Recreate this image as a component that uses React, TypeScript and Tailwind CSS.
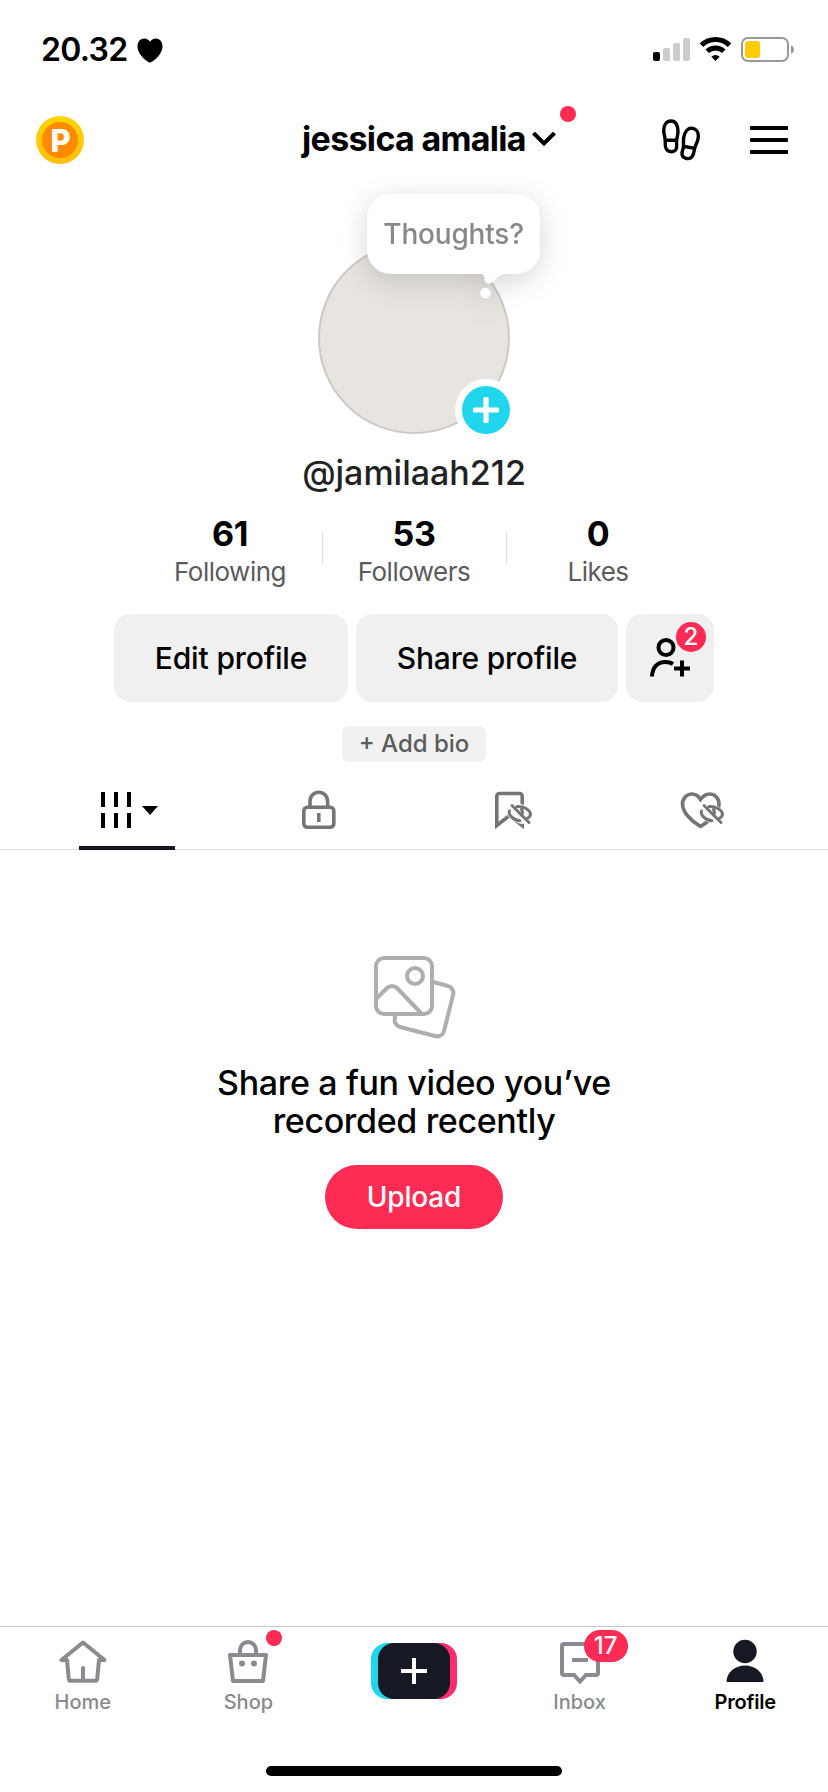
import type { ReactNode } from "react";

const stats = [
  { value: "61", label: "Following" },
  { value: "53", label: "Followers" },
  { value: "0", label: "Likes" },
];

const footprint =
  "M9 2C4 2 1.700 6.500 1.700 11.500c0 4 1.800 7 1.500 11C2.800 29 4.500 32.700 9.300 32.700c4.300 0 6-3 5.300-7.500-.9-4.700 1.400-7.200 1.400-13.200C16 6 13.500 2 9 2zM3 21.200h11.500";

function StatusBar() {
  return (
    <div className="flex h-[100px] items-center justify-between pl-[41px] pr-[34px]">
      <div className="flex items-center gap-[10px]">
        <span className="text-[32px] leading-[40px] font-semibold tracking-[-0.7px]">20.32</span>
        <svg width="26" height="25" viewBox="0 0 26 25">
          <path d="M13 24.500C11 24.500.5 17 .5 8.200.5 3.600 3.600.5 7.300.5c2.500 0 4.600 1.300 5.700 3.300C14.100 1.800 16.200.5 18.700.5c3.700 0 6.800 3.100 6.800 7.700C25.500 17 15 24.500 13 24.500z" />
        </svg>
      </div>
      <svg width="141" height="26" viewBox="0 0 141 26">
        {/* Signal */}
        <rect x="0" y="15" width="7" height="9" rx="2" />
        <rect x="10" y="11" width="7" height="13" rx="2" fill="#cccccc" />
        <rect x="20" y="6" width="7" height="18" rx="2" fill="#cccccc" />
        <rect x="30" y="1" width="7" height="23" rx="2" fill="#cccccc" />
        {/* Wifi */}
        <g fill="none" stroke="#000" strokeWidth="5">
          <path d="M48.500 8.300a20 20 0 0 1 28 0" />
          <path d="M54.200 14.300a12 12 0 0 1 16.600 0" />
        </g>
        <path d="M62.500 24l-4.200-4.300a6.200 6.200 0 0 1 8.400 0z" />
        {/* Battery */}
        <rect x="89" y="1" width="46" height="23" rx="6" fill="none" stroke="#999999" strokeWidth="2" />
        <rect x="92" y="4" width="15" height="17" rx="3" fill="#ffcc00" />
        <path d="M138 8.500c2 .6 3 2.100 3 4s-1 3.400-3 4z" fill="#999999" />
      </svg>
    </div>
  );
}

function Header() {
  return (
    <header className="flex h-20 items-center justify-between pl-9 pr-10">
      <div className="flex w-[160px]">
        <div className="flex size-12 items-center justify-center rounded-full bg-linear-to-b from-[#ffd500] to-[#ffbe0d]">
          <div className="flex size-[36px] items-center justify-center rounded-full bg-[#ff8a00] pl-px text-[31px] leading-none font-extrabold text-white">
            P
          </div>
        </div>
      </div>

      <div className="relative flex items-center gap-[6px]">
        <h1 className="-mt-[2px] text-[34px] leading-[40px] font-bold tracking-[-0.7px] whitespace-nowrap">jessica amalia</h1>
        <svg width="24" height="16" viewBox="0 0 24 16" fill="none" stroke="#000" strokeWidth="4">
          <path d="M1.500 1l10.500 10.500L22.500 1" />
        </svg>
        <span className="absolute -top-[15px] -right-5 size-4 rounded-full bg-[#fe2c55]" />
      </div>

      <div className="flex w-[126px] items-center justify-between">
        <svg width="38" height="42" viewBox="0 0 38 42" fill="none" stroke="#000" strokeWidth="3.400">
          <path d={footprint} />
          <path transform="translate(28 24.5) rotate(11) scale(-1 1) translate(-8.7 -17.3)" d={footprint} />
        </svg>
        <div className="flex w-[38px] flex-col gap-2">
          <span className="h-1 rounded-[1px] bg-black" />
          <span className="h-1 rounded-[1px] bg-black" />
          <span className="h-1 rounded-[1px] bg-black" />
        </div>
      </div>
    </header>
  );
}

function Avatar() {
  return (
    <div className="relative mt-[62px] size-48 rounded-full border-2 border-[#cdc9c6] bg-[#e8e5e0]">
      {/* Thought bubble */}
      <div className="absolute -top-[50px] left-[47px] drop-shadow-[0_6px_14px_rgba(0,0,0,0.16)]">
        <div className="flex h-20 w-[173px] items-center justify-center rounded-[24px] bg-white text-[28px] font-medium tracking-[-0.2px] text-[#888888]">
          Thoughts?
        </div>
        <svg className="absolute top-[79px] left-[113px]" width="34" height="26" viewBox="0 0 34 26" fill="#fff">
          <path d="M0 0v1c4 0 4 2 5 6.500C5.600 10.500 8 11.500 11 10c5-2.500 7-9 14-9V0z" />
          <circle cx="5.500" cy="20" r="5.200" />
        </svg>
      </div>
      <div className="absolute -right-[9px] -bottom-[9px] flex size-[62px] items-center justify-center rounded-full bg-white">
        <div className="flex size-12 items-center justify-center rounded-full bg-[#20d5ec]">
          <svg width="26" height="26" viewBox="0 0 26 26" fill="#fff">
            <rect x="0" y="10.400" width="26" height="5.200" rx="1" />
            <rect x="10.400" y="0" width="5.200" height="26" rx="1" />
          </svg>
        </div>
      </div>
    </div>
  );
}

function Stats() {
  return (
    <div className="mt-[21px] flex">
      {stats.map((stat, i) => (
        <div key={stat.label} className="flex w-[184px] items-center">
          <div className="flex flex-1 flex-col items-center">
            <span className="text-[34px] leading-[40px] font-bold tracking-[-0.3px]">{stat.value}</span>
            <span className="text-[26px] leading-[36px] tracking-[-0.5px] text-[#5b5b5b]">{stat.label}</span>
          </div>
          {i < 2 && <span className="-mr-px mb-2 h-8 w-px bg-[#dddddd]" />}
        </div>
      ))}
    </div>
  );
}

function Actions() {
  return (
    <div className="mt-6 flex gap-2">
      <button className="h-[88px] w-[234px] rounded-[16px] bg-[#f0f0f0] text-[30px] font-medium tracking-[-0.15px]">
        Edit profile
      </button>
      <button className="h-[88px] w-[262px] rounded-[16px] bg-[#f0f0f0] text-[30px] font-medium tracking-[-0.2px]">
        Share profile
      </button>
      <button className="relative flex h-[88px] w-[88px] items-center justify-center rounded-[16px] bg-[#f0f0f0]">
        <svg width="42" height="40" viewBox="0 0 42 40" fill="none" stroke="#000" strokeWidth="4">
          <circle cx="17" cy="9.500" r="7.500" />
          <path d="M3 38.500C3.500 29 8.500 24 16.500 24c3 0 5.500.7 7.500 2M33 22.500v16M25 30.500h16" />
        </svg>
        <span className="absolute top-2 right-2 flex size-[30px] items-center justify-center rounded-full bg-[#fe2c55] text-[24px] leading-none font-medium text-white">
          2
        </span>
      </button>
    </div>
  );
}

// Small crossed-out eye shared by the saved and liked tabs
function HiddenMark({ x, y }: { x: number; y: number }) {
  return (
    <g transform={`translate(${x} ${y})`}>
      <ellipse cx="8.500" cy="9.500" rx="14" ry="9.500" transform="rotate(25 8.500 9.500)" fill="#fff" stroke="none" />
      <path
        d="M1 1.500l17 17M6 2.500C12.500 2 19 6 19.500 10c0 1.700-1 3-2.700 4M-1.500 7C-3 10.500 2.500 16.500 9 16.700M10.500 5.500c1.500 2 1.300 4.300-.3 5.500"
        strokeWidth="3"
        strokeLinecap="round"
      />
    </g>
  );
}

function Tabs() {
  return (
    <div className="mt-[4px] flex h-[84px] w-full border-b border-[#e0e0e0]">
      <div className="ml-[79px] flex w-24 flex-col items-center justify-between">
        <div className="mt-[26px] ml-[5px] flex items-center gap-[11px]">
          <svg width="30" height="36" viewBox="0 0 30 36">
            <path d="M0 0h4v15H0zM13 0h4v15h-4zM26 0h4v15h-4zM0 21h4v15H0zM13 21h4v15h-4zM26 21h4v15h-4z" />
          </svg>
          <svg width="16" height="9" viewBox="0 0 16 9">
            <path d="M0 0h16L8 9z" />
          </svg>
        </div>
        <span className="-mb-px h-1 w-full bg-[#161823]" />
      </div>
      <div className="flex flex-1 pl-[127px]">
        <svg className="mt-6" width="34" height="40" viewBox="0 0 34 40" fill="none" stroke="#757575" strokeWidth="3.600">
          <rect x="1.800" y="17.300" width="30" height="20" rx="3.500" />
          <path d="M8 17V11a8.800 8.800 0 0 1 17.600 0v6M16.800 23v9" />
        </svg>
        <svg className="mt-6 ml-[157px]" width="42" height="40" viewBox="0 0 42 40" fill="none" stroke="#757575" strokeWidth="3.600">
          <path d="M3.800 35.500V6a2.500 2.500 0 0 1 2.500-2.500h20.400A2.500 2.500 0 0 1 29.200 6v29.500L16.500 25.500z" />
          <HiddenMark x={18} y={14} />
        </svg>
        <svg className="mt-6 ml-[145px]" width="46" height="40" viewBox="0 0 46 40" fill="none" stroke="#757575" strokeWidth="3.600">
          <path d="M20.500 9.500C18.300 6 15.500 4 12 4 6.500 4 2.500 8.500 2.500 14c0 8 8 16.500 18 22.500C30.500 30.500 39 22 39 14c0-5.500-4-10-9.300-10-3.700 0-6.700 2-9.200 5.500z" />
          <HiddenMark x={23} y={14} />
        </svg>
      </div>
    </div>
  );
}

function EmptyState() {
  return (
    <div className="mt-[106px] flex flex-col items-center">
      <svg className="ml-[2px]" width="84" height="84" viewBox="0 0 84 84" fill="none" stroke="#aeaeae" strokeWidth="4">
        <rect x="3" y="2" width="56" height="56" rx="8" />
        <circle cx="42" cy="20" r="8" />
        <path d="M3 43l11-11a7 7 0 0 1 10 0l24 25" />
        <path d="M60 26l15 4a7 7 0 0 1 5 9l-9 36a7 7 0 0 1-9 5l-35-9a7 7 0 0 1-5-9V58" />
      </svg>
      <p className="mt-[24px] text-center text-[34px] leading-[38px] font-medium tracking-[-0.35px]">
        Share a fun video you’ve
        <br />
        recorded recently
      </p>
      <button className="mt-[25px] h-16 w-[178px] rounded-full bg-[#fe2c55] text-[28px] font-medium tracking-[-0.2px] text-white">
        Upload
      </button>
    </div>
  );
}

function NavItem({ label, active, children }: { label: string; active?: boolean; children: ReactNode }) {
  return (
    <div className="flex flex-1 flex-col items-center pt-3">
      <div className="relative h-[46px]">{children}</div>
      <span className={active ? "mt-[5px] text-[20px] leading-6 font-semibold tracking-[-0.2px]" : "mt-[5px] text-[20px] leading-6 font-medium text-[#8a8a8e]"}>
        {label}
      </span>
    </div>
  );
}

function BottomNav() {
  return (
    <nav className="flex h-[166px] w-full flex-col items-center justify-between border-t border-[#c8c8c8] pb-4">
      <div className="flex w-full">
        <NavItem label="Home">
          <svg width="48" height="46" viewBox="0 0 48 46" fill="none" stroke="#8a8b91" strokeWidth="4">
            <path
              d="M2.500 21H8l1.800 19a2 2 0 0 0 2 1.800h24.400a2 2 0 0 0 2-1.800L40 21h5.500L24 3.500zM24 29v12"
              strokeLinejoin="round"
              strokeLinecap="round"
            />
          </svg>
        </NavItem>
        <NavItem label="Shop">
          <svg width="40" height="46" viewBox="0 0 40 46" fill="none" stroke="#8a8b91" strokeWidth="4">
            <path d="M2 16h36l-3 26H5zM12 16v-5a8 8 0 0 1 16 0v5" strokeLinejoin="round" />
            <circle cx="14" cy="24.500" r="3" fill="#8a8b91" stroke="none" />
            <circle cx="26" cy="24.500" r="3" fill="#8a8b91" stroke="none" />
          </svg>
          <span className="absolute -top-[9px] left-[38px] size-4 rounded-full bg-[#fe2c55]" />
        </NavItem>
        <div className="flex flex-1 justify-center pt-4">
          <div className="flex h-14 w-[86px] justify-center rounded-[16px] bg-linear-to-r from-[#20d5ec] from-50% to-[#fe2c6d] to-50%">
            <div className="flex w-[72px] items-center justify-center rounded-[16px] bg-[#161823]">
              <svg width="26" height="26" viewBox="0 0 26 26" fill="#fff">
                <path d="M0 11h11V0h4v11h11v4H15v11h-4V15H0z" />
              </svg>
            </div>
          </div>
        </div>
        <NavItem label="Inbox">
          <svg width="40" height="46" viewBox="0 0 40 46" fill="none" stroke="#8a8b91" strokeWidth="4">
            <path d="M4 5h32a2 2 0 0 1 2 2v27a2 2 0 0 1-2 2H26l-6 6.500L14 36H4a2 2 0 0 1-2-2V7a2 2 0 0 1 2-2zM12 21h16" />
          </svg>
          <span className="absolute -top-[9px] left-6 flex h-8 w-11 items-center justify-center rounded-full bg-[#fe2c55] text-[24px] leading-none font-medium text-white">
            17
          </span>
        </NavItem>
        <NavItem label="Profile" active>
          <svg width="38" height="46" viewBox="0 0 38 46" fill="#161823">
            <circle cx="19" cy="12.500" r="11.700" />
            <path d="M.5 41.500C1.500 33 9 26.500 19 26.500S36.500 33 37.500 41.500c0 1-.5 1.500-1.500 1.500H2c-1 0-1.500-.5-1.500-1.500z" />
          </svg>
        </NavItem>
      </div>
      <div className="h-[10px] w-[296px] rounded-full bg-black" />
    </nav>
  );
}

export default function App() {
  return (
    <div className="flex h-[1792px] w-[828px] flex-col overflow-hidden bg-white font-['Inter',sans-serif] text-black">
      <StatusBar />
      <Header />
      <main className="flex flex-1 flex-col items-center">
        <Avatar />
        <p className="mt-[19px] text-[34px] leading-[40px] font-medium text-[#222222]">@jamilaah212</p>
        <Stats />
        <Actions />
        <button className="mt-6 h-9 w-36 rounded-[7px] bg-[#f1f1f1] text-[24px] leading-none font-medium text-[#5b5b5b]">
          + Add bio
        </button>
        <Tabs />
        <EmptyState />
      </main>
      <BottomNav />
    </div>
  );
}
